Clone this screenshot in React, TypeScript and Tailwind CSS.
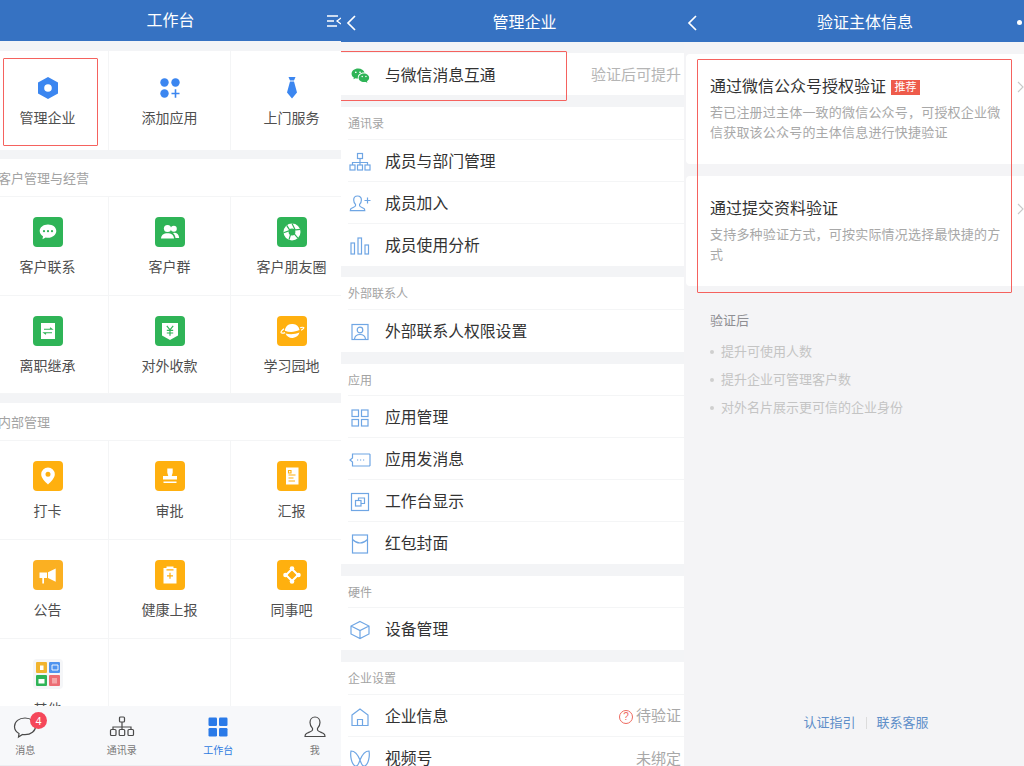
import type { ReactNode } from 'react'

const FONT = "font-['Liberation_Sans','Noto_Sans_CJK_SC',sans-serif]"

type Cell = { label: string; tile: string; icon: ReactNode }

const GREEN = 'bg-[#2fb457]'
const ORANGE = 'bg-[#ffb00f]'

function TileSvg({ children }: { children: ReactNode }) {
  return (
    <svg width="30" height="30" viewBox="0 0 30 30" fill="white">
      {children}
    </svg>
  )
}

const customerCells: Cell[] = [
  {
    label: '客户联系',
    tile: GREEN,
    icon: (
      <TileSvg>
        <path d="M15 7.500c-4.800 0-8.300 2.900-8.300 6.500 0 2.200 1.300 4.100 3.300 5.300l-.5 3 3.200-1.800c.8.200 1.500.3 2.300.3 4.800 0 8.300-3.100 8.300-6.800S19.800 7.500 15 7.500z" />
        <circle cx="11" cy="14.200" r="1.100" fill="#2fb457" />
        <circle cx="15" cy="14.200" r="1.100" fill="#2fb457" />
        <circle cx="19" cy="14.200" r="1.100" fill="#2fb457" />
      </TileSvg>
    ),
  },
  {
    label: '客户群',
    tile: GREEN,
    icon: (
      <TileSvg>
        <circle cx="12.500" cy="11.500" r="3.600" />
        <path d="M6 21.500c.2-3.600 2.800-5.300 6.500-5.300s6.300 1.700 6.500 5.300z" />
        <circle cx="18.800" cy="11.800" r="3" />
        <path d="M19 15.700c3 0 5 1.700 5.200 5.300h-3.700c-.2-2.100-1.100-3.700-2.500-4.700z" />
      </TileSvg>
    ),
  },
  {
    label: '客户朋友圈',
    tile: GREEN,
    icon: (
      <TileSvg>
        <circle cx="15" cy="15" r="8.500" />
        <circle cx="15" cy="15" r="3.400" fill="#2fb457" />
        <g stroke="#2fb457" strokeWidth="1.200">
          <path d="M15 6.500l3 6M23.100 12.400l-6.500.8M20.900 21.100l-4.300-4.900M12 22.600l1.900-6.300M6.500 15.800l6.100-2.200M9.700 8.400l3.500 5.500" />
        </g>
      </TileSvg>
    ),
  },
  {
    label: '离职继承',
    tile: GREEN,
    icon: (
      <TileSvg>
        <rect x="8" y="7" width="14" height="16" />
        <path d="M11 13.300h8l-2-1.500M19 16.700h-8l2 1.500" fill="none" stroke="#2fb457" strokeWidth="1.100" />
      </TileSvg>
    ),
  },
  {
    label: '对外收款',
    tile: GREEN,
    icon: (
      <TileSvg>
        <path d="M7 7h16v12.500L15 24l-8-4.500z" />
        <path d="M11.800 9.800l3.200 4 3.200-4M15 13.800v6M11.800 14.300h6.400M11.800 17h6.400" fill="none" stroke="#2fb457" strokeWidth="1.200" />
      </TileSvg>
    ),
  },
  {
    label: '学习园地',
    tile: ORANGE,
    icon: (
      <TileSvg>
        <path d="M8.300 12.500a7.500 7.500 0 0 1 14.200 1.600c-4.500 2-9.700 2.700-14.600.6.100-.8.200-1.500.4-2.200z" />
        <path d="M8.500 17.500c5 1.500 9.500.8 14-.9a7.500 7.500 0 0 1-14 .9z" />
        <path d="M7 12.700c-2.200 1.800-3.400 3.200-2.900 4 .5.700 2 .6 4-.1M23.200 11.700c2.200-.6 3.300-.6 3.600-.1.300.6-.8 1.600-2.700 2.700" fill="none" stroke="white" strokeWidth="1.200" />
      </TileSvg>
    ),
  },
]

const internalCells: Cell[] = [
  {
    label: '打卡',
    tile: ORANGE,
    icon: (
      <TileSvg>
        <path fillRule="evenodd" d="M15 6.500a6.800 6.800 0 0 1 6.800 6.800c0 3.700-3.700 7.400-6.800 10.200-3.100-2.800-6.800-6.500-6.800-10.200A6.800 6.800 0 0 1 15 6.500zm0 4.300a2.500 2.500 0 1 0 0 5 2.500 2.500 0 0 0 0-5z" />
      </TileSvg>
    ),
  },
  {
    label: '审批',
    tile: ORANGE,
    icon: (
      <TileSvg>
        <path d="M12.300 7.500h5.400v4.300l-1 3.200h5.300v3.500H8V15h5.300l-1-3.200z" />
        <rect x="8.500" y="20.500" width="13" height="1.500" />
      </TileSvg>
    ),
  },
  {
    label: '汇报',
    tile: ORANGE,
    icon: (
      <TileSvg>
        <rect x="9" y="6.500" width="12.500" height="17" />
        <path d="M11.500 9.500h2.500v2.500h-2.500zM11.500 14h7M11.500 17h5M11.500 20h6.500" stroke="#ffb00f" strokeWidth="1.100" fill="none" />
      </TileSvg>
    ),
  },
  {
    label: '公告',
    tile: 'bg-[#fbb022]',
    icon: (
      <TileSvg>
        <path d="M6.500 12.500h7.500v5.500H11v5.500H9.300V18H6.500zM15 12.300l7.700-3.800v13.200L15 18z" />
      </TileSvg>
    ),
  },
  {
    label: '健康上报',
    tile: ORANGE,
    icon: (
      <TileSvg>
        <path d="M11.500 6.500h7v1.500h3v15.500h-13V8h3z" />
        <path d="M11.500 9.800h7M15 12.800v6M12 15.800h6" stroke="#ffb00f" strokeWidth="1.200" fill="none" />
      </TileSvg>
    ),
  },
  {
    label: '同事吧',
    tile: ORANGE,
    icon: (
      <TileSvg>
        <path d="M15 9l6 6-6 6-6-6z" fill="none" stroke="white" strokeWidth="2" />
        <circle cx="15" cy="8.500" r="2.300" />
        <circle cx="21.500" cy="15" r="2.300" />
        <circle cx="15" cy="21.500" r="2.300" />
        <circle cx="8.500" cy="15" r="2.300" />
      </TileSvg>
    ),
  },
  {
    label: '其他',
    tile: 'bg-[#f5f6f8]',
    icon: (
      <svg width="30" height="30" viewBox="0 0 30 30">
        <rect x="3" y="3" width="11" height="11" rx="1" fill="#f1b42f" />
        <rect x="16" y="3" width="11" height="11" rx="1" fill="#4f94ef" />
        <rect x="3" y="16" width="11" height="11" rx="1" fill="#2fb457" />
        <rect x="16" y="16" width="11" height="11" rx="1" fill="#ec6d74" />
        <rect x="7" y="6.500" width="3.500" height="4.500" fill="white" />
        <path d="M19 6h6v5h-6z" fill="none" stroke="white" strokeWidth="0.900" />
        <path d="M5.500 20h6v4.500h-6z" fill="white" />
        <path d="M19 19h5v5.500h-5z" fill="#f4a5a8" />
      </svg>
    ),
  },
]

function IconCell({ cell, rowClass = 'h-[99px]' }: { cell: Cell; rowClass?: string }) {
  return (
    <div className={`flex flex-col items-center border-r border-b border-[#f4f5f6] bg-white pt-[20px] ${rowClass}`}>
      <div className={`flex size-[30px] items-center justify-center rounded-[4px] ${cell.tile}`}>{cell.icon}</div>
      <div className="mt-[10px] text-[14px] leading-[20px] text-[#4f4f4f]">{cell.label}</div>
    </div>
  )
}

function TopCell({ label, icon }: { label: string; icon: ReactNode }) {
  return (
    <div className="flex h-[99px] flex-col items-center border-r border-[#f4f5f6] bg-white pt-[25px]">
      {icon}
      <div className="mt-[8px] text-[14px] leading-[20px] text-[#4f4f4f]">{label}</div>
    </div>
  )
}

function SectionTitle({ children }: { children: ReactNode }) {
  return (
    <div className="flex h-[38px] items-center border-b border-[#f4f5f6] bg-white pt-[2px] pl-[11px] text-[13px] text-[#a3a3a3]">
      {children}
    </div>
  )
}

function Workbench() {
  return (
    <div className="relative flex h-full w-[341px] shrink-0 flex-col overflow-hidden bg-[#f3f4f6]">
      <div className="relative flex h-[41px] shrink-0 items-center justify-center bg-[#3672c2] pt-[1px] text-[16px] text-white">
        工作台
        <svg className="absolute top-[14px] right-0" width="14" height="14" viewBox="0 0 14 14" fill="none" stroke="white" strokeWidth="1.300">
          <path d="M0 2h11M0 7h7M0 12h10M14 4l-4 3 4 3" />
        </svg>
      </div>
      <div className="min-h-0 flex-1 overflow-hidden">
        <div className="-ml-[13px] w-[366px] pt-[10px]">
          <div className="grid grid-cols-3">
            <TopCell
              label="管理企业"
              icon={
                <svg width="24" height="24" viewBox="0 0 24 24">
                  <path fillRule="evenodd" fill="#3b86f0" d="M12 1l10 5.600v10.800L12 23 2 17.400V6.600zM12 8.200a3.800 3.800 0 1 0 0 7.600 3.800 3.800 0 0 0 0-7.600z" />
                </svg>
              }
            />
            <TopCell
              label="添加应用"
              icon={
                <svg width="24" height="24" viewBox="0 0 24 24" fill="#3b86f0">
                  <circle cx="6.500" cy="6.500" r="4.200" />
                  <circle cx="17.500" cy="6.500" r="4.200" />
                  <circle cx="6.500" cy="17.500" r="4.200" />
                  <path d="M13.500 16.700h3.200v-3.400h1.600v3.400h3.200v1.600h-3.200v3.400h-1.600v-3.400h-3.200z" />
                </svg>
              }
            />
            <TopCell
              label="上门服务"
              icon={
                <svg width="24" height="24" viewBox="0 0 24 24" fill="#3b86f0">
                  <path d="M8.500 1h7l-1.500 3.500h-4zM10 5.500h4l3 11-5 6-5-6z" />
                </svg>
              }
            />
          </div>
          <div className="h-[9px]" />
          <SectionTitle>客户管理与经营</SectionTitle>
          <div className="grid grid-cols-3">
            {customerCells.map((c) => (
              <IconCell key={c.label} cell={c} rowClass="h-[98.5px]" />
            ))}
          </div>
          <div className="h-[9px]" />
          <SectionTitle>内部管理</SectionTitle>
          <div className="grid grid-cols-3 bg-white">
            {internalCells.map((c) => (
              <IconCell key={c.label} cell={c} />
            ))}
            <div className="border-r border-[#f4f5f6]" />
            <div className="border-r border-[#f4f5f6]" />
          </div>
        </div>
      </div>
      <div className="h-[60px] shrink-0 overflow-hidden border-b border-[#eceef1] bg-[#f7f8fa]">
        <div className="-ml-[23px] grid w-[386px] grid-cols-4 pt-[9px] text-[10px] leading-[14px] text-[#777]">
          <div className="relative flex flex-col items-center">
            <svg width="24" height="24" viewBox="0 0 24 24" fill="none" stroke="#4a4a4a" strokeWidth="1.200">
              <path d="M12 3C6 3 1.500 6.500 1.500 11.500c0 3 1.700 5.500 4.500 7l-.5 3.500 4-2.500c.8.200 1.600.2 2.500.2 6 0 10.500-3.700 10.500-8.200S18 3 12 3z" />
            </svg>
            <div className="absolute top-[-3px] left-[53px] flex size-[17px] items-center justify-center rounded-full bg-[#f5475a] text-[11px] text-white">
              4
            </div>
            <div className="mt-[5px]">消息</div>
          </div>
          <div className="flex flex-col items-center">
            <svg width="26" height="24" viewBox="0 0 26 24" fill="none" stroke="#4a4a4a" strokeWidth="1.200">
              <rect x="10.500" y="2" width="5" height="5" rx="1" />
              <path d="M13 7v5M4 14v-2h18v2M13 12v2" />
              <rect x="1.500" y="14.500" width="5.500" height="6" rx="1" />
              <rect x="10.200" y="14.500" width="5.500" height="6" rx="1" />
              <rect x="19" y="14.500" width="5.500" height="6" rx="1" />
            </svg>
            <div className="mt-[5px]">通讯录</div>
          </div>
          <div className="flex flex-col items-center text-[#2f7be0]">
            <svg width="24" height="24" viewBox="0 0 24 24" fill="#2a7ae8">
              <rect x="2.500" y="2.500" width="8.500" height="8.500" rx="1.200" />
              <rect x="13" y="2.500" width="8.500" height="8.500" rx="1.200" />
              <rect x="2.500" y="13" width="8.500" height="8.500" rx="1.200" />
              <rect x="13" y="13" width="8.500" height="8.500" rx="1.200" />
            </svg>
            <div className="mt-[5px]">工作台</div>
          </div>
          <div className="flex flex-col items-center">
            <svg width="24" height="24" viewBox="0 0 24 24" fill="none" stroke="#4a4a4a" strokeWidth="1.200">
              <path d="M12 2c-3 0-5 2.300-5 5.500 0 2.500 1.200 4.500 2.500 5.800v1.700c0 1-3 2-6 3.500-1 .5-1.500 1.500-1.500 3h20c0-1.500-.5-2.500-1.500-3-3-1.500-6-2.500-6-3.500v-1.700c1.300-1.300 2.500-3.300 2.500-5.800C17 4.300 15 2 12 2z" />
            </svg>
            <div className="mt-[5px]">我</div>
          </div>
        </div>
      </div>
      <div className="absolute top-[58px] left-[3px] h-[88px] w-[95px] rounded-[1px] border-[1.5px] border-[#f5625e]" />
    </div>
  )
}

const L = { fill: 'none', stroke: '#6fa6e4', strokeWidth: 1.200 }

function LineIcon({ children }: { children: ReactNode }) {
  return (
    <svg width="22" height="22" viewBox="0 0 22 22" {...L}>
      {children}
    </svg>
  )
}

type Row = { label: string; icon: ReactNode; right?: ReactNode }
type Group = { title: string; gap: string; head: string; rows: Row[] }

const groups: Group[] = [
  {
    title: '通讯录',
    gap: 'mt-[12px]',
    head: 'h-[33px]',
    rows: [
      {
        label: '成员与部门管理',
        icon: (
          <LineIcon>
            <rect x="8.500" y="2.500" width="5" height="5" />
            <path d="M11 7.500v4M3.500 14v-2.500h15V14M11 11.500V14" />
            <rect x="1" y="14" width="5" height="5" />
            <rect x="8.500" y="14" width="5" height="5" />
            <rect x="16" y="14" width="5" height="5" />
          </LineIcon>
        ),
      },
      {
        label: '成员加入',
        icon: (
          <LineIcon>
            <path d="M8.500 3c-2.300 0-3.800 1.800-3.800 4 0 1.800.8 3.300 1.800 4.300v1.400c0 .9-2 1.500-4 2.600-.8.400-1.200 1.200-1.200 2.400h14.500c0-1.200-.4-2-1.200-2.400-2-1.100-4-1.700-4-2.600v-1.400c1-1 1.800-2.500 1.800-4.300 0-2.200-1.500-4-3.800-4z" />
            <path d="M15.500 7.500h6M18.500 4.500v6" />
          </LineIcon>
        ),
      },
      {
        label: '成员使用分析',
        icon: (
          <LineIcon>
            <rect x="2" y="8" width="3.500" height="11" />
            <rect x="9" y="3" width="3.500" height="16" />
            <rect x="16" y="10" width="3.500" height="9" />
          </LineIcon>
        ),
      },
    ],
  },
  {
    title: '外部联系人',
    gap: 'mt-[11px]',
    head: 'h-[33px]',
    rows: [
      {
        label: '外部联系人权限设置',
        icon: (
          <LineIcon>
            <rect x="3" y="3.500" width="16" height="15" />
            <circle cx="11" cy="9" r="2.800" />
            <path d="M5.500 18c.4-3 2.700-4.500 5.500-4.500s5.100 1.500 5.500 4.500" />
          </LineIcon>
        ),
      },
    ],
  },
  {
    title: '应用',
    gap: 'mt-[12px]',
    head: 'h-[32px]',
    rows: [
      {
        label: '应用管理',
        icon: (
          <LineIcon>
            <rect x="3" y="3" width="6.500" height="6.500" />
            <rect x="12.500" y="3" width="6.500" height="6.500" />
            <rect x="3" y="12.500" width="6.500" height="6.500" />
            <rect x="12.500" y="12.500" width="6.500" height="6.500" />
          </LineIcon>
        ),
      },
      {
        label: '应用发消息',
        icon: (
          <LineIcon>
            <path d="M3.500 5h17l.5.500v11l-.5.500h-17v-4L1 11l2.500-2z" />
            <path d="M8 11h1.200M11 11h1.200M14 11h1.200" />
          </LineIcon>
        ),
      },
      {
        label: '工作台显示',
        icon: (
          <LineIcon>
            <rect x="2.500" y="2.500" width="17" height="17" />
            <rect x="6.500" y="9.500" width="5.500" height="5.500" />
            <path d="M9.500 9.500V7h6v5.500H12" />
          </LineIcon>
        ),
      },
      {
        label: '红包封面',
        icon: (
          <LineIcon>
            <rect x="3.500" y="2" width="15" height="18" />
            <path d="M3.500 6.500c2.500 2.500 5 3.500 7.500 3.500s5-1 7.500-3.500" />
          </LineIcon>
        ),
      },
    ],
  },
  {
    title: '硬件',
    gap: 'mt-[12px]',
    head: 'h-[32px]',
    rows: [
      {
        label: '设备管理',
        icon: (
          <LineIcon>
            <path d="M11 2.500l9 4.500v8l-9 4.500L2 15V7zM2 7l9 4.500L20 7M11 11.500v8" />
          </LineIcon>
        ),
      },
    ],
  },
  {
    title: '企业设置',
    gap: 'mt-[12px]',
    head: 'h-[33px]',
    rows: [
      {
        label: '企业信息',
        icon: (
          <LineIcon>
            <path d="M3 9l8-6 8 6v10.500H3zM8.500 19.500v-6h5v6" />
          </LineIcon>
        ),
        right: (
          <span className="flex items-center gap-[3px] text-[#a8a8a8]">
            <span className="flex size-[14px] items-center justify-center rounded-full border border-[#ee6a5f] text-[10px] leading-none text-[#ee6a5f]">?</span>
            待验证
          </span>
        ),
      },
      {
        label: '视频号',
        icon: (
          <LineIcon>
            <path d="M2 3c4 0 7 4 9 9 2-5 5-9 9-9 1 5-.5 13-4 15-2.500 1-4-3-5-6-1 3-2.500 7-5 6C2.500 16 1 8 2 3z" />
          </LineIcon>
        ),
        right: <span className="text-[#a8a8a8]">未绑定</span>,
      },
    ],
  },
]

function ManageRow({ row, last }: { row: Row; last: boolean }) {
  return (
    <div className={`ml-[7px] flex h-[42px] shrink-0 items-center pt-[2px] pr-[3px] ${last ? '' : 'border-b border-[#f4f5f6]'}`}>
      <div className="flex w-[37px] shrink-0 justify-start pl-[1px]">{row.icon}</div>
      <div className="flex-1 text-[15.800px] text-[#333]">{row.label}</div>
      {row.right && <div className="text-[15px]">{row.right}</div>}
    </div>
  )
}

function ManagePanel() {
  return (
    <div className="relative flex h-full w-[343px] shrink-0 flex-col overflow-hidden bg-[#f3f4f6]">
      <div className="relative flex h-[42px] shrink-0 items-center justify-center bg-[#3672c2] pt-[3px] pl-[24px] text-[16px] text-white">
        管理企业
        <svg className="absolute top-[15px] left-[5px]" width="10" height="16" viewBox="0 0 10 16" fill="none" stroke="white" strokeWidth="1.700">
          <path d="M9 1L2 8l7 7" />
        </svg>
      </div>
      <div className="mt-[11px] flex h-[42px] shrink-0 items-center bg-white pt-[3px] pr-[3px] pl-[10px]">
        <div className="w-[34px] shrink-0">
          <svg width="19" height="16" viewBox="0 0 20 17" fill="#2fb457">
            <path d="M7.500 0.500C3.500 0.500.5 3 .5 6c0 1.800 1 3.200 2.500 4.200l-.5 1.800 2.200-1.100c.7.200 1.300.3 2 .3h.6C6.600 7.400 9.400 4.800 13.800 4.800h.5C13.600 2.300 10.900.5 7.500.5z" />
            <path d="M13.800 5.800c-3.300 0-5.800 2-5.800 4.600s2.500 4.600 5.800 4.600c.6 0 1.100-.1 1.700-.2l1.800 1-.4-1.600c1.400-.9 2.300-2.300 2.300-3.800 0-2.600-2.600-4.600-5.400-4.600z" />
            <circle cx="5" cy="4.500" r="0.900" fill="white" />
            <circle cx="9.500" cy="4.500" r="0.900" fill="white" />
            <circle cx="11.800" cy="9" r="0.800" fill="white" />
            <circle cx="15.800" cy="9" r="0.800" fill="white" />
          </svg>
        </div>
        <div className="flex-1 text-[15.800px] text-[#333]">与微信消息互通</div>
        <div className="text-[15px] text-[#b5b5b5]">验证后可提升</div>
      </div>
      {groups.map((g) => (
        <div key={g.title} className={`shrink-0 bg-white ${g.gap}`}>
          <div className={`ml-[7px] flex items-center border-b border-[#f4f5f6] pt-[2px] text-[12px] text-[#a3a3a3] ${g.head}`}>{g.title}</div>
          {g.rows.map((r, i) => (
            <ManageRow key={r.label} row={r} last={i === g.rows.length - 1} />
          ))}
        </div>
      ))}
      <div className="absolute top-[51px] left-[-1px] h-[50px] w-[227px] rounded-[1px] border-[1.5px] border-[#f5625e]" />
    </div>
  )
}

function Chevron() {
  return (
    <svg className="absolute top-[27px] right-0" width="7" height="12" viewBox="0 0 7 12" fill="none" stroke="#c9c9c9" strokeWidth="1.100">
      <path d="M1 1l5 5-5 5" />
    </svg>
  )
}

function VerifyPanel() {
  return (
    <div className="relative flex h-full min-w-0 flex-1 flex-col overflow-hidden bg-[#f4f4f6]">
      <div className="relative flex h-[42px] shrink-0 items-center justify-center bg-[#3672c2] pt-[3px] pl-[22px] text-[16px] text-white">
        验证主体信息
        <svg className="absolute top-[15px] left-[3px]" width="10" height="16" viewBox="0 0 10 16" fill="none" stroke="white" strokeWidth="1.700">
          <path d="M9 1L2 8l7 7" />
        </svg>
        <div className="absolute top-[20px] right-[2px] size-[5px] rounded-full bg-white" />
      </div>
      <div className="relative mt-[12px] ml-[2px] h-[110px] shrink-0 rounded-l-[4px] bg-white pt-[21px] pl-[24px]">
        <div className="flex items-center text-[16px] leading-[24px] text-[#333]">
          通过微信公众号授权验证
          <span className="ml-[5px] flex h-[15px] w-[29px] items-center justify-center bg-[#ee5b4b] text-[11px] text-white">推荐</span>
        </div>
        <div className="mt-[4px] w-[296px] text-[13px] leading-[20px] tracking-[0.2px] text-[#a8a8a8]">
          若已注册过主体一致的微信公众号，可授权企业微信获取该公众号的主体信息进行快捷验证
        </div>
        <Chevron />
      </div>
      <div className="relative mt-[12px] ml-[2px] h-[110px] shrink-0 rounded-l-[4px] bg-white pt-[21px] pl-[24px]">
        <div className="text-[16px] leading-[24px] text-[#333]">通过提交资料验证</div>
        <div className="mt-[4px] w-[296px] text-[13px] leading-[20px] tracking-[0.2px] text-[#a8a8a8]">
          支持多种验证方式，可按实际情况选择最快捷的方式
        </div>
        <Chevron />
      </div>
      <div className="mt-[26px] pl-[26px] text-[13px] leading-[18px] text-[#8e8e93]">验证后</div>
      <div className="mt-[12px] flex flex-col gap-[9px] pl-[26px] text-[13px] leading-[19px] text-[#c4c4c4]">
        {['提升可使用人数', '提升企业可管理客户数', '对外名片展示更可信的企业身份'].map((t) => (
          <div key={t} className="flex items-center gap-[7px]">
            <span className="size-[4px] rounded-full bg-[#cfcfcf]" />
            {t}
          </div>
        ))}
      </div>
      <div className="mt-auto mb-[34px] flex items-center justify-center gap-[10px] pl-[24px] text-[13px] leading-[18px] text-[#5f8fc9]">
        <span>认证指引</span>
        <span className="h-[12px] w-px bg-[#dcdcdc]" />
        <span>联系客服</span>
      </div>
      <div className="absolute top-[59px] left-[13px] h-[234px] w-[315px] rounded-[1px] border-[1.5px] border-[#f5625e]" />
    </div>
  )
}

export default function App() {
  return (
    <div className={`flex h-[766px] w-[1024px] overflow-hidden bg-white ${FONT}`}>
      <Workbench />
      <ManagePanel />
      <VerifyPanel />
    </div>
  )
}
